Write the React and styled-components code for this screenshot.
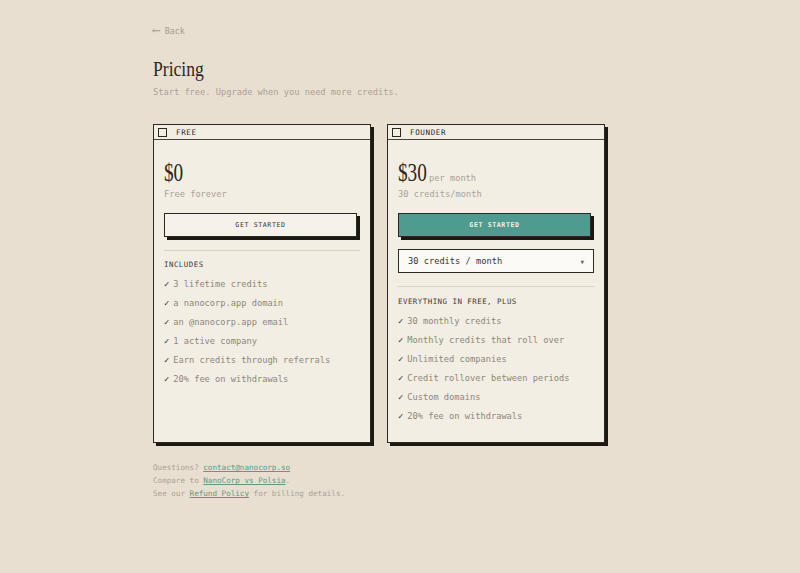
import React from 'react';
import styled, { createGlobalStyle } from 'styled-components';

const GlobalStyle = createGlobalStyle`
  html, body {
    margin: 0;
    padding: 0;
    background: #e8dfd0;
  }
  body {
    font-family: "DejaVu Sans Mono", "Liberation Mono", monospace;
    color: #2b2723;
  }
`;

const Page = styled.div`
  min-height: 573px;
  padding: 25px 0 0 153px;
  box-sizing: border-box;
`;

const BackLink = styled.a`
  display: flex;
  align-items: center;
  font-size: 8.4px;
  line-height: 12px;
  color: #a59d92;
  text-decoration: none;

  span {
    font-size: 11px;
    margin-right: 5px;
  }
`;

const Title = styled.h1`
  margin: 20px 0 0;
  font-family: "Liberation Serif", serif;
  font-weight: 400;
  font-size: 22px;
  line-height: 24px;
  color: #2b2723;
  transform: scaleX(0.8);
  transform-origin: left center;
`;

const Subtitle = styled.p`
  margin: 5px 0 0;
  font-size: 8.7px;
  line-height: 12px;
  color: #aaa297;
`;

const Plans = styled.div`
  display: grid;
  grid-template-columns: 218px 218px;
  gap: 16px;
  margin-top: 26px;
  align-items: stretch;
`;

const Card = styled.div`
  display: flex;
  flex-direction: column;
  background: #f3eee3;
  border: 1px solid #2b2723;
  box-shadow: 3px 3px 0 #1c1814;
`;

const CardHeader = styled.div`
  display: flex;
  align-items: center;
  gap: 9px;
  height: 14px;
  padding: 0 4px;
  border-bottom: 1px solid #4a443d;
  font-size: 7.6px;
  letter-spacing: 0.6px;
  color: #2b2723;
`;

const Box = styled.span`
  width: 7px;
  height: 7px;
  border: 1.3px solid #2b2723;
`;

const CardBody = styled.div`
  padding: 20px 10px 17px;
  display: flex;
  flex-direction: column;
`;

const PriceRow = styled.div`
  display: flex;
  align-items: baseline;
  height: 26px;
`;

const Price = styled.span`
  display: inline-block;
  font-family: "Liberation Serif", serif;
  font-size: 26px;
  line-height: 26px;
  color: #2b2723;
  transform: scaleX(0.74);
  transform-origin: left center;
  width: ${p => p.$w}px;
`;

const Per = styled.span`
  font-size: 8.7px;
  color: #aaa297;
`;

const Note = styled.div`
  margin-top: 2px;
  font-size: 8.7px;
  line-height: 12px;
  color: #aaa297;
`;

const Button = styled.button`
  margin-top: 13px;
  height: 24px;
  width: calc(100% - 3px);
  border: 1px solid #2b2723;
  background: ${p => (p.$primary ? '#4f9b8f' : '#f6f2e9')};
  color: ${p => (p.$primary ? '#f5f1e8' : '#3a3530')};
  box-shadow: 3px 3px 0 #1c1814;
  font-family: inherit;
  font-size: 6.6px;
  letter-spacing: 0.6px;
  font-weight: ${p => (p.$primary ? 700 : 400)};
  padding: 0;
  cursor: pointer;
`;

const Select = styled.div`
  margin-top: 12px;
  height: 24px;
  box-sizing: border-box;
  border: 1px solid #2b2723;
  background: #fcfaf6;
  display: flex;
  align-items: center;
  justify-content: space-between;
  padding: 0 9px;
  font-size: 8.7px;
  color: #3a3530;

  small {
    font-size: 6px;
    color: #6f685f;
  }
`;

const Divider = styled.hr`
  margin: 13px 0 0;
  border: 0;
  border-top: 1px solid #d9d1c3;
`;

const ListTitle = styled.div`
  margin-top: ${p => (p.$loose ? 10 : 9)}px;
  font-size: 7.4px;
  line-height: 10px;
  letter-spacing: 0.5px;
  color: #3f3a34;
`;

const Features = styled.ul`
  list-style: none;
  margin: 5px 0 0;
  padding: 0;
`;

const Feature = styled.li`
  display: flex;
  align-items: center;
  height: 18.9px;
  font-size: 8.7px;
  color: #8d867b;
  white-space: nowrap;

  &::before {
    content: '✓';
    color: #3a3530;
    margin-right: 4px;
  }
`;

const Footer = styled.div`
  margin-top: 18px;
  font-size: 7.6px;
  line-height: 13px;
  color: #aaa297;

  a {
    color: #5a9a86;
    text-decoration: underline;
  }
`;

const plans = [
  {
    name: 'FREE',
    price: '$0',
    width: 20,
    note: 'Free forever',
    heading: 'INCLUDES',
    features: [
      '3 lifetime credits',
      'a nanocorp.app domain',
      'an @nanocorp.app email',
      '1 active company',
      'Earn credits through referrals',
      '20% fee on withdrawals',
    ],
  },
  {
    name: 'FOUNDER',
    price: '$30',
    width: 31,
    per: 'per month',
    note: '30 credits/month',
    primary: true,
    select: '30 credits / month',
    heading: 'EVERYTHING IN FREE, PLUS',
    features: [
      '30 monthly credits',
      'Monthly credits that roll over',
      'Unlimited companies',
      'Credit rollover between periods',
      'Custom domains',
      '20% fee on withdrawals',
    ],
  },
];

const App = () => {
  return (
    <>
      <GlobalStyle />
      <Page>
        <BackLink href="#">
          <span>⟵</span>Back
        </BackLink>
        <Title>Pricing</Title>
        <Subtitle>Start free. Upgrade when you need more credits.</Subtitle>

        <Plans>
          {plans.map(plan => (
            <Card key={plan.name}>
              <CardHeader>
                <Box />
                {plan.name}
              </CardHeader>
              <CardBody>
                <PriceRow>
                  <Price $w={plan.width}>{plan.price}</Price>
                  {plan.per && <Per>{plan.per}</Per>}
                </PriceRow>
                <Note>{plan.note}</Note>
                <Button $primary={plan.primary}>GET STARTED</Button>
                {plan.select && (
                  <Select>
                    {plan.select}
                    <small>▼</small>
                  </Select>
                )}
                <Divider />
                <ListTitle $loose={!!plan.select}>{plan.heading}</ListTitle>
                <Features>
                  {plan.features.map(f => (
                    <Feature key={f}>{f}</Feature>
                  ))}
                </Features>
              </CardBody>
            </Card>
          ))}
        </Plans>

        <Footer>
          <div>
            Questions? <a href="#">contact@nanocorp.so</a>
          </div>
          <div>
            Compare to <a href="#">NanoCorp vs Polsia</a>.
          </div>
          <div>
            See our <a href="#">Refund Policy</a> for billing details.
          </div>
        </Footer>
      </Page>
    </>
  );
};

export default App;
